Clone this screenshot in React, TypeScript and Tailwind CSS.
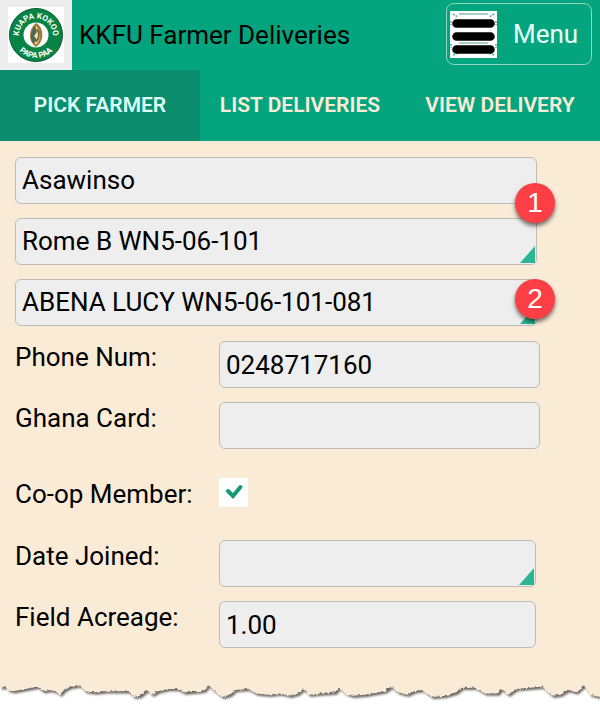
import { ReactNode } from 'react';

const FIELD =
  'block h-[47px] w-full appearance-none rounded-md border border-[#bdbbb8] bg-[#eeeeee] px-[6px] text-[26px] text-black outline-none';

const TABS = ['PICK FARMER', 'LIST DELIVERIES', 'VIEW DELIVERY'];

/** Outline of the torn edge at the foot of the page, as x,y pairs. */
const TORN_EDGE =
  '0,5 5,4 8,7 13,8 25,6 37,4 43,8 50,7 55,8 60,11 64,7 70,4 80,3 85,8 95,9 105,8 120,8 128,8 134,13 140,12 147,7 152,11 158,8 168,6 177,6 184,9 200,8 205,7 208,3 213,7 222,13 230,11 235,7 248,6 256,10 268,11 280,10 290,12 298,10 303,6 309,11 320,10 335,9 339,5 345,10 352,12 365,11 385,8 391,4 398,9 407,11 414,8 422,7 432,13 445,12 456,9 462,5 475,5 485,10 498,10 501,6 508,11 516,6 530,5 542,4 552,12 560,11 568,7 576,9 584,3 590,11 600,13';

function Logo() {
  return (
    <svg viewBox="0 0 56 56" className="h-14 w-14 bg-white" aria-label="Kuapa Kokoo Papa Paa" role="img">
      <circle cx="28" cy="28" r="26.5" fill="#078443" stroke="#075c31" strokeWidth="1" />
      <circle cx="28" cy="28" r="12.5" fill="white" />
      <path d="M28 16C36 20 37 34 28 40C20 35 20 22 28 16Z" fill="#a37c36" />
      <path d="M28 19C33 24 33 32 28 38C25 32 25 25 28 19Z" fill="#eee2b0" />
      <path d="M27 19C23 24 21 31 25 36L29 33L26 29L29 25Z" fill="#4c6858" />
      <path d="M29 22C32 26 31 31 28 35" fill="none" stroke="#74572c" strokeWidth="1.5" />
      <path id="logo-top" d="M11.600 33A17 17 0 1 1 44.400 33" fill="none" />
      <path id="logo-bottom" d="M5 28A23 23 0 0 0 51 28" fill="none" />
      <g fill="white" fontSize="8" fontWeight="700" fontFamily="Roboto, sans-serif" textAnchor="middle">
        <text>
          <textPath href="#logo-top" startOffset="50%">KUAPA KOKOO</textPath>
        </text>
        <text>
          <textPath href="#logo-bottom" startOffset="50%">PAPA PAA</textPath>
        </text>
      </g>
    </svg>
  );
}

function MenuIcon() {
  return (
    <svg viewBox="0 0 47 47" className="h-[47px] w-[47px]" aria-hidden="true">
      <rect width="47" height="47" fill="white" />
      <path d="M9 3H38M9 32H38" stroke="#8dbfae" strokeWidth="1.5" />
      <path d="M3 3l5 3M44 3l-5 3M3 44l5-2M44 44l-5-2M1 10v4M46 10v4M1 33v4M46 33v4" stroke="#4fb597" strokeWidth="1.5" strokeDasharray="2 1" />
      <g stroke="black" strokeWidth="8.5" strokeLinecap="round">
        <path d="M6.500 12.500H40.500M6.500 25.500H40.500M6.500 38.500H40.500" />
      </g>
    </svg>
  );
}

function Badge({ children }: { children: ReactNode }) {
  return (
    <span className="flex h-10 w-10 items-center justify-center rounded-full bg-[#fc3f44] font-['Liberation_Sans',sans-serif] text-[28px] text-white shadow-[0_3px_4px_rgba(0,0,0,0.55)]">
      {children}
    </span>
  );
}

interface PickerProps {
  id?: string;
  label?: string;
  value: string;
}

/** Drop-down with the green corner mark. */
function Picker({ id, label, value }: PickerProps) {
  return (
    <div className="relative">
      <select id={id} aria-label={label} defaultValue={value} className={FIELD}>
        <option value={value}>{value}</option>
      </select>
      <svg viewBox="0 0 15 17" className="pointer-events-none absolute right-[2px] bottom-[2px] h-[17px] w-[15px]" aria-hidden="true">
        <path d="M15 0V17H0Z" fill="#2bb594" />
      </svg>
    </div>
  );
}

interface RowProps {
  id: string;
  label: string;
  children: ReactNode;
}

function Row({ id, label, children }: RowProps) {
  return (
    <div className="flex items-start">
      <label htmlFor={id} className="w-[204px] shrink-0 text-[26px] leading-8">
        {label}
      </label>
      <div className="min-w-0 flex-1">{children}</div>
    </div>
  );
}

export default function App() {
  return (
    <div className="bg-[#faebd7] font-['Roboto',sans-serif] text-black">
      <header className="flex h-[70px] items-center bg-[#04a57e]">
        <div className="flex h-full w-[72px] shrink-0 items-center justify-center bg-[#ededed]">
          <Logo />
        </div>
        <h1 className="ml-[7px] flex-1 text-[26px] whitespace-nowrap">KKFU Farmer Deliveries</h1>
        <button
          type="button"
          className="mr-2 mb-[2px] flex h-[62px] w-[146px] items-center gap-4 rounded-lg border border-[#8fd5c1] pl-[3px] text-[26px] text-[#e6fff8]"
        >
          <MenuIcon />
          Menu
        </button>
      </header>

      <nav className="grid h-[71px] grid-cols-3 bg-[#04a57e]">
        {TABS.map((tab, i) => (
          <button
            key={tab}
            type="button"
            className={`text-[21px] font-semibold whitespace-nowrap ${i === 0 ? 'bg-[#0b8d6d] text-[#dcfff7]' : 'text-[#faebd7]'}`}
          >
            {tab}
          </button>
        ))}
      </nav>

      <form className="pt-4 pl-[15px]">
        <div className="space-y-[14px] pr-[63px]">
          <div className="relative">
            <Picker label="Society" value="Asawinso" />
            <div className="absolute top-[26px] -right-[18px] z-10">
              <Badge>1</Badge>
            </div>
          </div>
          <Picker label="Community" value="Rome B WN5-06-101" />
          <div className="relative">
            <Picker label="Farmer" value="ABENA LUCY WN5-06-101-081" />
            <div className="absolute top-0 -right-[18px] z-10">
              <Badge>2</Badge>
            </div>
          </div>
        </div>

        <div className="space-y-[14px] pt-[15px] pr-[60px]">
          <Row id="phone" label="Phone Num:">
            <input id="phone" type="text" defaultValue="0248717160" className={FIELD} />
          </Row>
          <Row id="card" label="Ghana Card:">
            <input id="card" type="text" className={FIELD} />
          </Row>
        </div>

        <div className="pt-[29px] pb-[30px]">
          <Row id="member" label="Co-op Member:">
            <div className="relative h-8 w-[29px]">
              <input id="member" type="checkbox" defaultChecked className="peer block h-[29px] w-[29px] appearance-none bg-white" />
              <svg
                viewBox="0 0 29 29"
                className="pointer-events-none absolute top-0 left-0 hidden h-[29px] w-[29px] peer-checked:block"
                aria-hidden="true"
              >
                <path d="M9 13L14 18L21.500 9" fill="none" stroke="#119a76" strokeWidth="4" strokeLinecap="round" />
              </svg>
            </div>
          </Row>
        </div>

        <div className="space-y-[14px] pr-16">
          <Row id="joined" label="Date Joined:">
            <Picker id="joined" value="" />
          </Row>
          <Row id="acreage" label="Field Acreage:">
            <input id="acreage" type="text" defaultValue="1.00" className={FIELD} />
          </Row>
        </div>
      </form>

      {/* Torn paper edge */}
      <svg viewBox="0 0 600 20" preserveAspectRatio="none" className="mt-[34px] block h-[23px] w-full" aria-hidden="true">
        <defs>
          <filter id="torn-shadow" x="-5%" y="-50%" width="110%" height="200%">
            <feGaussianBlur stdDeviation="0.9" />
          </filter>
          <filter id="torn-rough" x="-5%" y="-50%" width="110%" height="200%">
            <feTurbulence type="fractalNoise" baseFrequency="0.4" numOctaves="2" seed="3" />
            <feDisplacementMap in="SourceGraphic" scale="3" xChannelSelector="R" yChannelSelector="G" />
          </filter>
        </defs>
        <rect width="600" height="20" fill="white" />
        <polygon points={`0,-9 ${TORN_EDGE} 600,-9`} fill="#6f6a65" filter="url(#torn-shadow)" transform="translate(2 2)" />
        <polygon points={`-9,-9 ${TORN_EDGE} 609,13 609,-9`} fill="#faebd7" filter="url(#torn-rough)" />
      </svg>
    </div>
  );
}
